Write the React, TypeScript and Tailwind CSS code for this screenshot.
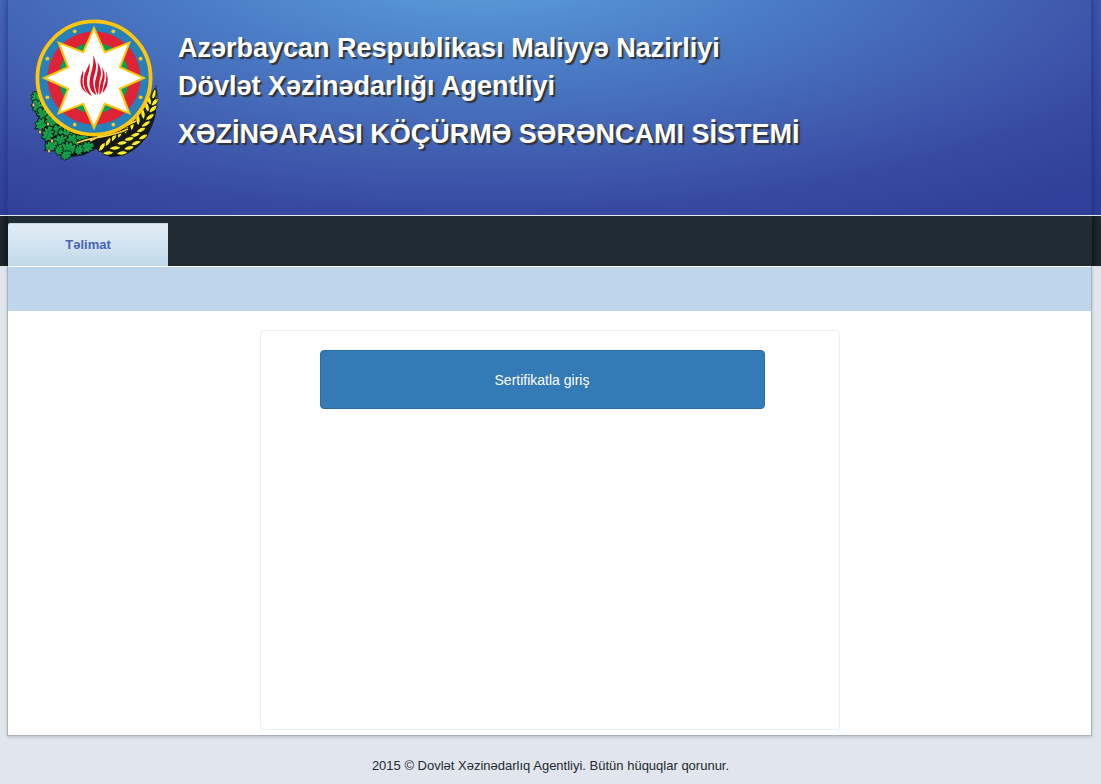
const CX = 64;
const CY = 61;

const polar = (radius: number, degrees: number) => {
  const a = (degrees * Math.PI) / 180;
  return { x: CX + radius * Math.sin(a), y: CY - radius * Math.cos(a) };
};

const starPoints = Array.from({ length: 16 }, (_, i) => {
  const p = polar(i % 2 === 0 ? 50 : 28, i * 22.5);
  return `${p.x.toFixed(2)},${p.y.toFixed(2)}`;
}).join(" ");

const studs = Array.from({ length: 8 }, (_, i) => polar(50.5, 22.5 + i * 45));

// x, y, rotation, scale
const oakLeaves = [
  [6, 81, -10, 0.9],
  [8, 90, -30, 1.1],
  [14, 98, -40, 1.2],
  [12, 107, 60, 1.1],
  [22, 105, -40, 1.2],
  [27, 114, 80, 1.25],
  [18, 117, 20, 1.15],
  [36, 118, -60, 1.2],
  [30, 124, 70, 1.2],
  [44, 123, 95, 1.2],
  [21, 129, 60, 1],
  [39, 131, -70, 1.2],
  [53, 122, -70, 1],
  [57, 130, 70, 1],
  [49, 133, 20, 0.8],
  [36, 138, 60, 0.85],
  [29, 133, 20, 0.8],
];

const acorns = [
  [3.5, 88],
  [10, 115],
  [18, 107],
  [22, 124],
  [19, 134],
  [59, 117],
];

// x, y, rotation
const grains = [
  [124, 77, 15], [119, 83, -20], [125, 85, 42], [117, 90, -14], [123, 92, 48],
  [113, 97, -8], [120, 100, 54], [108, 103, -2], [116, 107, 58], [102, 108, 4],
  [111, 113, 64], [96, 112, 12], [105, 118, 70], [90, 116, 18], [99, 122, 76],
  [84, 120, 24], [92, 126, 80], [85, 131, 84], [78, 125, 30], [78, 136, 85],
  [72, 130, 36], [106, 126, 68], [99, 131, 76], [92, 136, 82], [113, 120, 62],
];

function Emblem() {
  return (
    <svg viewBox="0 0 128 144" className="h-36 w-32 shrink-0" role="img" aria-label="Gerb">
      <defs>
        <path
          id="oak"
          d="M0-7C2-8 3-6 2-4C5-6 6-3 3.5-1.5C6-1.5 6.5 1.5 3.5 2C5.5 3 5 5.5 2 5L.5 8L-1 5C-4 6-5.5 4-3.5 2C-6.5 1.5-6-1.5-3.5-1.5C-6-3.5-4.5-6-2-4C-3-6-2-8 0-7Z"
        />
        <path id="grain" d="M0-5.5C2.900-3 2.900 2.500 0 5.500C-2.900 2.500-2.900-3 0-5.500Z" />
      </defs>

      <path
        d="M4 76C2 90 10 101 15 110C15 126 25 138 36 141L54 138L66 132L80 140C101 141 121 124 126 95L125 76L108 98L64 116L25 101L8 77Z"
        fill="#10120f"
        opacity=".9"
      />
      {oakLeaves.map(([x, y, r, s]) => (
        <g key={`${x}-${y}`} transform={`translate(${x} ${y}) rotate(${r}) scale(${s})`}>
          <use href="#oak" fill="#17a04c" stroke="#0b0f0c" strokeWidth=".8" />
          <path d="M0-4V4" stroke="#0a7434" strokeWidth=".5" />
        </g>
      ))}
      {acorns.map(([x, y]) => (
        <ellipse key={`${x}-${y}`} cx={x} cy={y} rx="1.500" ry="2" fill="#f0c08c" stroke="#14110c" strokeWidth=".5" />
      ))}

      {grains.map(([x, y, r]) => (
        <use
          key={`${x}-${y}`}
          href="#grain"
          transform={`translate(${x} ${y}) rotate(${r})`}
          fill="#f8ee2c"
          stroke="#14140c"
          strokeWidth=".9"
        />
      ))}
      <path
        d="M43 115C60 120 80 118 106 104M47 126C62 119 80 121 98 112M60 124L80 114"
        fill="none"
        stroke="#17150a"
        strokeWidth="3.500"
      />
      <path
        d="M43 115C60 120 80 118 106 104M47 126C62 119 80 121 98 112M60 124L80 114"
        fill="none"
        stroke="#f6d651"
        strokeWidth="1.800"
      />
      <path d="M126 78V68M127 84V74M121 80L125 71" stroke="#14140c" strokeWidth=".6" />

      <circle cx={CX} cy={CY} r="56.600" fill="#2680ba" stroke="#fdc60b" strokeWidth="3.800" />
      <circle cx={CX} cy={CY} r="46.500" fill="#df2337" />
      <circle cx={CX} cy={CY} r="35.500" fill="#0d9b55" />
      {studs.map((p) => (
        <circle key={`${p.x}-${p.y}`} cx={p.x} cy={p.y} r="1.900" fill="#f2c928" />
      ))}
      <polygon points={starPoints} fill="#fff" stroke="#fdc60b" strokeWidth="2" strokeMiterlimit="10" />

      <g fill="#d9152c">
        <path d="M63 38C67 46 66.500 51 65 56C62 64 63.500 71 66.500 78C60 75 58.500 68 60 61C61.500 53 64.500 47 63 38Z" />
        <path d="M59.500 46C60.500 53 57.500 57 57 63C56.500 69 59 74 62 79C55.500 76 53 69 54 61C54.500 55 58 51 59.500 46Z" />
        <path d="M53 53C54 57 52.500 60 52.500 64C52.500 69 54 73 57 76C52 73.500 50 68 50.500 63C50.500 59 52.500 56 53 53Z" />
        <path d="M67.500 45C71 51 72 56 70 62C68.500 68 69 72 68 78C65 73 64 67 66 61C67.500 56 68.500 51 67.500 45Z" />
        <path d="M72 50C74.500 54 75.500 59 74 64C72.500 69 73 74 69.500 78C69 72 70 68 71.500 63C73 59 73 55 72 50Z" />
        <path d="M76 54C78.500 60 78 66 76.500 70C75 73 74 75 72.500 76C73 71 75 67 76 63C76.500 60 76.500 57 76 54Z" />
      </g>
    </svg>
  );
}

export default function App() {
  return (
    <div className="min-h-screen bg-[#e1e5ed] font-['Liberation_Sans',Arial,sans-serif] text-[#222b31]">
      <header className="overflow-hidden border-b border-[#e4e9ef] bg-[#313f99] bg-[radial-gradient(ellipse_860px_290px_at_480px_-35px,#5ea2df_0%,#4b7dc6_35%,#405bae_68%,#374aa2_85%,#303f99_105%)] pr-[9px] pl-[7px]">
        <div className="flex min-h-[215px] border-x border-[#2c3b8c]/60 pt-[17px] pl-[22px] shadow-[0_0_7px_rgba(20,25,110,0.6)]">
          <Emblem />
          <div className="pt-3 pl-5 text-[27px] leading-[38px] font-bold text-white [text-shadow:2px_2px_1px_#333]">
            <p>Azərbaycan Respublikası Maliyyə Nazirliyi</p>
            <p>Dövlət Xəzinədarlığı Agentliyi</p>
            <h1 className="pt-[10px]">XƏZİNƏARASI KÖÇÜRMƏ SƏRƏNCAMI SİSTEMİ</h1>
          </div>
        </div>
      </header>

      <nav className="overflow-hidden bg-[#212b33] pr-[9px] pl-[8px]">
        <div className="flex h-[50px] items-end shadow-[0_0_8px_2px_rgba(0,0,0,0.7)]">
          <a
            href="#telimat"
            className="flex h-[43px] w-40 items-center justify-center rounded-tl-xs border-t border-[#c4d8e4] bg-linear-to-b from-[#e1edf5] to-[#c1d9eb] text-[13px] font-bold text-[#4864b4]"
          >
            Təlimat
          </a>
        </div>
      </nav>

      <div className="overflow-hidden pr-[9px] pb-1 pl-[7px]">
        <main className="border-x border-b border-[#a9b2b8] bg-white shadow-[0_1px_3px_rgba(60,80,80,0.25)]">
          <div className="h-[45px] border-t border-white bg-[#bfd6ea]" />
          <div className="px-4 pt-[19px] pb-[5px]">
            <section className="mx-auto min-h-[400px] max-w-[580px] rounded border border-[#e7f0f9] pt-[19px] pr-[74px] pl-[59px]">
              <button
                type="button"
                className="h-[59px] w-full rounded border border-[#2e6da4] bg-[#337ab7] text-sm text-white"
              >
                Sertifikatla giriş
              </button>
            </section>
          </div>
        </main>
      </div>

      <footer className="pt-4 text-center text-[13px] leading-5">
        2015 © Dovlət Xəzinədarlıq Agentliyi. Bütün hüquqlar qorunur.
      </footer>
    </div>
  );
}
